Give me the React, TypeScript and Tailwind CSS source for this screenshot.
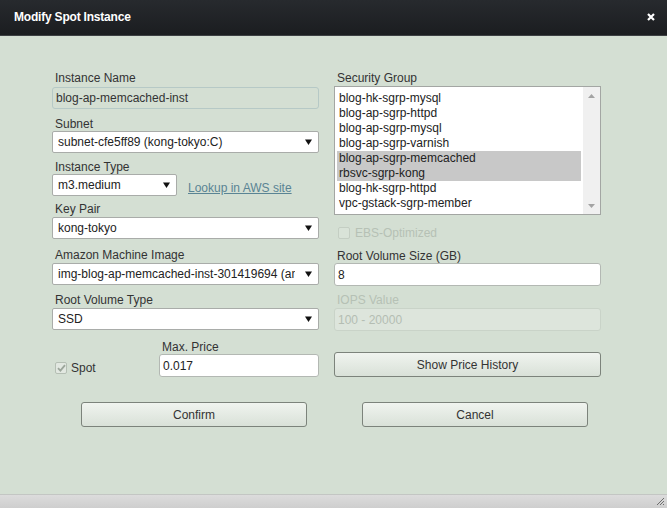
import React from 'react';

const font = { fontFamily: '"Liberation Sans", Arial, sans-serif' };

function Arrow() {
  return (
    <svg width="7" height="6" viewBox="0 0 7 6" className="shrink-0">
      <path d="M0 0.5 H7 L3.5 6 Z" fill="#111" />
    </svg>
  );
}

function Label({ children, className = '' }: { children: React.ReactNode; className?: string }) {
  return <div className={`h-[14px] leading-[14px] text-[12px] text-[#333] pl-[3px] ${className}`}>{children}</div>;
}

function Select({ value, className = '' }: { value: string; className?: string }) {
  return (
    <div className={`flex items-center h-[22px] bg-white border border-[#a9aca9] rounded-[2px] pl-[5px] pr-[6px] ${className}`}>
      <span className="flex-1 min-w-0 overflow-hidden whitespace-nowrap text-[12px] text-[#222] mr-[10px]">{value}</span>
      <Arrow />
    </div>
  );
}

function Input({ value, disabled }: { value: string; disabled?: boolean }) {
  return (
    <div
      className={`flex items-center h-[23px] border rounded-[3px] pl-[3px] text-[12px] ${
        disabled ? 'bg-[#dde5dc] border-[#c9d3c8] text-[#b4bdb3]' : 'bg-white border-[#b3b8b3] text-[#222]'
      }`}
    >
      {value}
    </div>
  );
}

function Button({ children, className = '' }: { children: React.ReactNode; className?: string }) {
  return (
    <div
      className={`flex items-center justify-center h-[25px] rounded-[3px] border border-[#7c837b] bg-gradient-to-b from-[#f0f4ef] to-[#d9e1d8] text-[12px] text-[#333] ${className}`}
    >
      {children}
    </div>
  );
}

const groups = [
  'blog-hk-sgrp-mysql',
  'blog-ap-sgrp-httpd',
  'blog-ap-sgrp-mysql',
  'blog-ap-sgrp-varnish',
  'blog-ap-sgrp-memcached',
  'rbsvc-sgrp-kong',
  'blog-hk-sgrp-httpd',
  'vpc-gstack-sgrp-member',
];
const selected = ['blog-ap-sgrp-memcached', 'rbsvc-sgrp-kong'];

export default function App() {
  return (
    <div className="w-[667px] h-[508px] flex flex-col bg-[#d4dfd3] overflow-hidden" style={font}>
      {/* title bar */}
      <div className="h-[36px] shrink-0 flex items-center justify-between pl-[14px] pr-[12px] bg-gradient-to-b from-[#272a2e] to-[#1b1d20] border-b border-[#3d4043]">
        <span className="text-white font-bold text-[12px] tracking-[-0.2px] pb-[1px]">Modify Spot Instance</span>
        <svg width="8" height="8" viewBox="0 0 8 8" className="mb-[1px]">
          <path d="M1 1 L7 7 M7 1 L1 7" stroke="#fff" strokeWidth="2.2" />
        </svg>
      </div>

      {/* body */}
      <div className="flex-1 flex flex-col pt-[35px]">
        <div className="flex gap-[15px] pl-[52px]">
          {/* left column */}
          <div className="w-[267px] flex flex-col">
            <Label>Instance Name</Label>
            <div className="mt-[2px] h-[22px] flex items-center border border-[#b6c9c6] rounded-[3px] pl-[3px] text-[12px] text-[#333]">
              blog-ap-memcached-inst
            </div>

            <Label className="mt-[8px]">Subnet</Label>
            <Select value="subnet-cfe5ff89 (kong-tokyo:C)" />

            <Label className="mt-[7px]">Instance Type</Label>
            <div className="flex items-start">
              <Select value="m3.medium" className="w-[125px]" />
              <span className="ml-[11px] mt-[7px] text-[12px] leading-[14px] text-[#5a8494] underline">Lookup in AWS site</span>
            </div>

            <Label className="mt-[6px]">Key Pair</Label>
            <Select value="kong-tokyo" className="mt-[1px]" />

            <Label className="mt-[9px]">Amazon Machine Image</Label>
            <Select value="img-blog-ap-memcached-inst-301419694 (ami-8a8c4e8b)" className="mt-[1px]" />

            <Label className="mt-[8px]">Root Volume Type</Label>
            <Select value="SSD" className="mt-[1px]" />

            <div className="flex mt-[10px]">
              <div className="w-[107px] flex items-end pl-[3px]">
                <div className="flex items-center gap-[4px]">
                  <div className="w-[12px] h-[12px] rounded-[2px] border border-[#b5bfb4] bg-[#e2e8e1] flex items-center justify-center">
                    <svg width="9" height="8" viewBox="0 0 9 8">
                      <path d="M1 4.2 L3.4 6.6 L8 1.2" fill="none" stroke="#9ca69b" strokeWidth="1.8" />
                    </svg>
                  </div>
                  <span className="text-[12px] text-[#333]">Spot</span>
                </div>
              </div>
              <div className="flex-1 flex flex-col">
                <Label>Max. Price</Label>
                <Input value="0.017" />
              </div>
            </div>
          </div>

          {/* right column */}
          <div className="w-[267px] flex flex-col">
            <Label>Security Group</Label>
            <div className="mt-[1px] h-[129px] flex bg-white border border-[#a3a6a3]">
              <div className="flex-1 pt-[4px] px-[2px]">
                {groups.map((g) => (
                  <div
                    key={g}
                    className={`h-[15px] leading-[15px] pl-[2px] text-[12px] text-[#222] ${selected.includes(g) ? 'bg-[#c8c8c8]' : ''}`}
                  >
                    {g}
                  </div>
                ))}
              </div>
              <div className="w-[17px] bg-[#f0f0f0] flex flex-col items-center justify-between pt-[7px] pb-[6px]">
                <svg width="7" height="4" viewBox="0 0 7 4">
                  <path d="M0 4 L3.5 0 L7 4 Z" fill="#a3a3a3" />
                </svg>
                <svg width="7" height="4" viewBox="0 0 7 4">
                  <path d="M0 0 L7 0 L3.5 4 Z" fill="#a3a3a3" />
                </svg>
              </div>
            </div>

            <div className="mt-[11px] h-[14px] flex items-center gap-[5px] pl-[4px]">
              <div className="w-[12px] h-[12px] rounded-[2px] border border-[#c4cec3] bg-[#d9e3d8]" />
              <span className="text-[12px] text-[#b6c1b5]">EBS-Optimized</span>
            </div>

            <Label className="mt-[9px]">Root Volume Size (GB)</Label>
            <Input value="8" />

            <Label className="mt-[7px] text-[#b6c1b5]">IOPS Value</Label>
            <div className="mt-[1px]">
              <Input value="100 - 20000" disabled />
            </div>

            <Button className="mt-[21px] h-[24px]">Show Price History</Button>
          </div>
        </div>

        <div className="flex pl-[81px] gap-[55px] mt-[25px]">
          <Button className="w-[226px]">Confirm</Button>
          <Button className="w-[226px]">Cancel</Button>
        </div>
      </div>

      {/* footer */}
      <div className="h-[14px] shrink-0 flex justify-end items-end border-t border-[#c3c6c3] bg-gradient-to-b from-[#dcdcdc] to-[#cecece] pr-[2px] pb-[2px]">
        <svg width="10" height="10" viewBox="0 0 10 10">
          <path d="M9 2 L2 9 M9 5 L5 9 M9 8 L8 9" stroke="#6e6e6e" strokeWidth="1" />
        </svg>
      </div>
    </div>
  );
}
